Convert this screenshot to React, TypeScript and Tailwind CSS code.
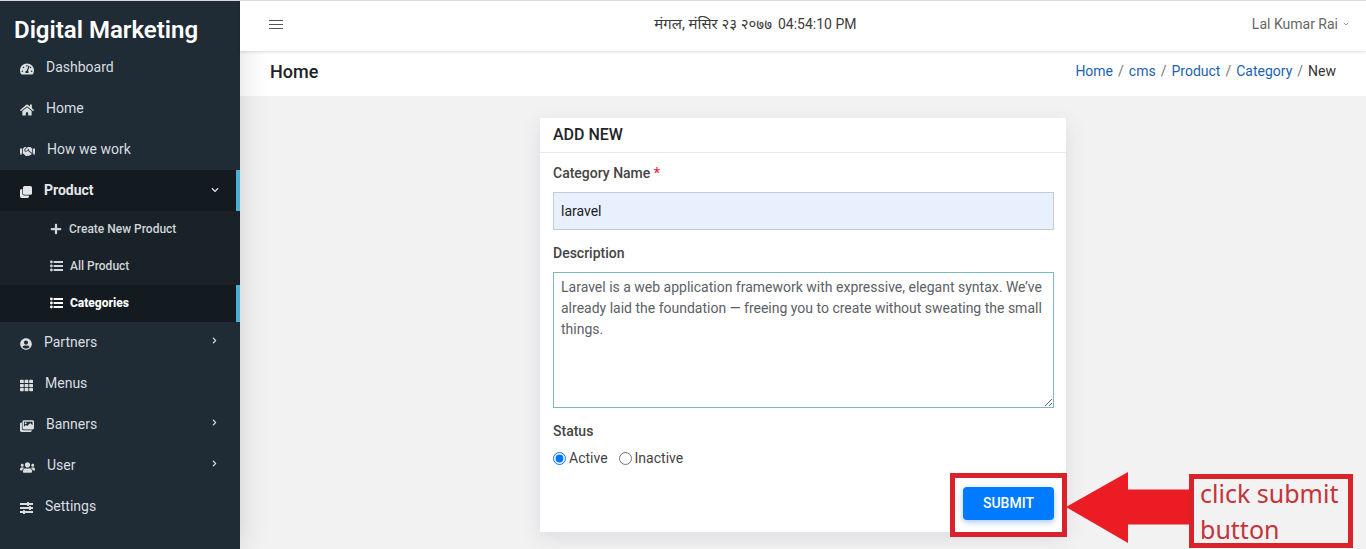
import React from "react";
import {
  FaChevronDown,
  FaChevronRight,
  FaHandshake,
  FaHome,
  FaPlus,
  FaTachometerAlt,
  FaTh,
  FaUserCircle,
  FaUsers,
} from "react-icons/fa";

type IconProps = { className?: string };
type Item = {
  label: string;
  icon: React.ComponentType<IconProps>;
  size: string;
  more?: boolean;
};

function CopyIcon({ className }: IconProps) {
  return (
    <svg viewBox="0 0 13 13" className={className} fill="currentColor" aria-hidden="true">
      <rect x="3.2" y="0" width="9.8" height="9.6" rx="1.8" />
      <path d="M2.5 3.2H1.8A1.8 1.8 0 0 0 0 5v6.2A1.8 1.8 0 0 0 1.8 13H8a1.8 1.8 0 0 0 1.8-1.8v-.9H4.6a2.1 2.1 0 0 1-2.1-2.1Z" />
    </svg>
  );
}

function ListIcon({ className }: IconProps) {
  return (
    <svg viewBox="0 0 13 12" className={className} fill="currentColor" aria-hidden="true">
      <circle cx="1.4" cy="2" r="1.4" />
      <circle cx="1.4" cy="6" r="1.4" />
      <circle cx="1.4" cy="10" r="1.4" />
      <path d="M3.6 1H13V3H3.6ZM3.6 5H13V7H3.6ZM3.6 9H13V11H3.6Z" />
    </svg>
  );
}

function PicturesIcon({ className }: IconProps) {
  return (
    <svg viewBox="0 0 14 12" className={className} fill="currentColor" aria-hidden="true">
      <path d="M1.9 2.4H1.4A1.4 1.4 0 0 0 0 3.8V10.6A1.4 1.4 0 0 0 1.4 12H10.4a1.4 1.4 0 0 0 1.4-1.4V10.2H3.6A1.7 1.7 0 0 1 1.9 8.5Z" />
      <path
        fillRule="evenodd"
        d="M3.9.3H12.6A1.4 1.4 0 0 1 14 1.7V8.1A1.4 1.4 0 0 1 12.6 9.5H3.9A1.4 1.4 0 0 1 2.5 8.1V1.7A1.4 1.4 0 0 1 3.9.3ZM4 1.8V6.6L6 4.9 7.2 6 10.2 3.1 12.5 5.2V1.8Z"
      />
      <circle cx="5.7" cy="3.2" r="1" />
    </svg>
  );
}

function SlidersIcon({ className }: IconProps) {
  return (
    <svg viewBox="0 0 13 12" className={className} fill="currentColor" aria-hidden="true">
      <path d="M0 1H13V3H0ZM0 5H13V7H0ZM0 9H13V11H0Z" />
      <rect x="7" y="0" width="2" height="4" rx=".5" />
      <rect x="9" y="4" width="2" height="4" rx=".5" />
      <rect x="3" y="8" width="2" height="4" rx=".5" />
    </svg>
  );
}

const topItems: Item[] = [
  { label: "Dashboard", icon: FaTachometerAlt, size: "w-[14px]" },
  { label: "Home", icon: FaHome, size: "w-[14px]" },
  { label: "How we work", icon: FaHandshake, size: "w-[15px]" },
];

const bottomItems: Item[] = [
  { label: "Partners", icon: FaUserCircle, size: "w-3", more: true },
  { label: "Menus", icon: FaTh, size: "w-[13px]" },
  { label: "Banners", icon: PicturesIcon, size: "w-[14px]", more: true },
  { label: "User", icon: FaUsers, size: "w-[15px]", more: true },
  { label: "Settings", icon: SlidersIcon, size: "w-[13px]" },
];

const subItems = [
  { label: "Create New Product", icon: FaPlus, size: "w-3", active: false },
  { label: "All Product", icon: ListIcon, size: "w-[13px]", active: false },
  { label: "Categories", icon: ListIcon, size: "w-[13px]", active: true },
];

function NavItem({ label, icon: Icon, size, more }: Item) {
  return (
    <li>
      <a href="#" className="flex h-[41px] items-center gap-3 pr-[22px] pl-5 text-[#d9dee1]">
        <Icon className={`${size} mt-[3px] h-auto shrink-0`} />
        <span className="grow">{label}</span>
        {more && <FaChevronRight className="mb-1 size-[7px]" />}
      </a>
    </li>
  );
}

function Sidebar() {
  return (
    <aside className="z-10 w-60 shrink-0 bg-[#1f2b35] shadow-[0_0_28px_rgba(0,0,0,0.15)]">
      <div className="flex h-[45px] items-end pl-[14px] text-2xl leading-8 font-semibold text-white">
        Digital Marketing
      </div>
      <nav className="pt-px">
        <ul>
          {topItems.map((item) => (
            <NavItem key={item.label} {...item} />
          ))}
          <li>
            <a
              href="#"
              className="flex h-[41px] items-center gap-3 border-r-4 border-[#4bafd4] bg-[#131a20] pr-[17px] pl-5 font-bold text-[#e4e7e9]"
            >
              <CopyIcon className="mt-[3px] w-3 shrink-0" />
              <span className="grow">Product</span>
              <FaChevronDown className="mb-[2px] size-2" />
            </a>
            <ul className="bg-[#192229] text-xs">
              {subItems.map(({ label, icon: Icon, size, active }) => (
                <li key={label}>
                  <a
                    href="#"
                    className={`flex h-[37px] items-center gap-[7px] border-r-4 pb-[2px] pl-[50px] ${
                      active
                        ? "border-[#4bafd4] bg-[#131a20] font-extrabold text-white"
                        : "border-transparent font-medium text-[#d0d5d8]"
                    }`}
                  >
                    <Icon className={`${size} h-auto shrink-0`} />
                    {label}
                  </a>
                </li>
              ))}
            </ul>
          </li>
          {bottomItems.map((item) => (
            <NavItem key={item.label} {...item} />
          ))}
        </ul>
      </nav>
    </aside>
  );
}

function Breadcrumb() {
  return (
    <nav aria-label="Breadcrumb">
      <ol className="flex text-[#333]">
        {["Home", "cms", "Product", "Category"].map((name) => (
          <li key={name} className="flex">
            <a href="#" className="text-[#1c62ad]">
              {name}
            </a>
            <span className="px-[5px] text-[#777]">/</span>
          </li>
        ))}
        <li>New</li>
      </ol>
    </nav>
  );
}

function SubmitCallout() {
  return (
    <div className="pointer-events-none absolute -inset-x-[13px] -top-[14px] -bottom-[17px] border-[5px] border-[#d8232a]">
      <svg
        viewBox="0 0 124 71"
        className="absolute top-[-6px] left-[111px] h-[71px] w-[124px]"
        fill="#ec1c24"
        aria-hidden="true"
      >
        <path d="M0 35 62 0V17.5H124V52.5H62V71Z" />
      </svg>
      <p className="absolute top-[-4px] left-[234px] h-[74px] w-[164px] border-[5px] border-[#d8232a] bg-[#f2f2f2] pl-[6px] font-['Noto_Sans',sans-serif] text-[25px] leading-9 whitespace-nowrap text-[#c4343a]">
        <span className="-mt-1 block">
          click submit
          <br />
          button
        </span>
      </p>
    </div>
  );
}

function CategoryForm() {
  return (
    <form
      onSubmit={(e) => e.preventDefault()}
      className="mx-auto w-full max-w-[526px] bg-white shadow-[0_6px_20px_rgba(69,65,120,0.12)]"
    >
      <h2 className="border-b border-[#e6e8ea] px-[13px] py-[5px] text-base leading-6 font-medium text-[#212529]">
        ADD NEW
      </h2>
      <div className="pt-[10px] pr-3 pb-3 pl-[13px]">
        <label htmlFor="name" className="mb-2 block font-medium">
          Category Name <span className="text-[#e02b33]">*</span>
        </label>
        <input
          id="name"
          defaultValue="laravel"
          className="mb-[13px] block h-[38px] w-full border border-[#c5cbd5] bg-[#e8f0fe] px-[7px] text-[#222] outline-none"
        />
        <label htmlFor="description" className="mb-2 block font-medium">
          Description
        </label>
        <textarea
          id="description"
          defaultValue="Laravel is a web application framework with expressive, elegant syntax. We’ve already laid the foundation — freeing you to create without sweating the small things."
          className="mb-[13px] block h-[136px] w-full resize border border-[#7fb5cb] px-[7px] py-1 text-[#5b6166] outline-none"
        />
        <fieldset>
          <legend className="mb-[6px] font-medium">Status</legend>
          <div className="flex gap-[11px]">
            <label className="flex items-center gap-[3px]">
              <input type="radio" name="status" defaultChecked className="size-[13px]" />
              Active
            </label>
            <label className="flex items-center gap-[3px]">
              <input type="radio" name="status" className="size-[13px]" />
              Inactive
            </label>
          </div>
        </fieldset>
        <div className="mt-[18px] flex justify-end">
          <div className="relative">
            <button
              type="submit"
              className="block h-[33px] w-[91px] rounded bg-[#007bff] font-medium text-white shadow-[0_2px_6px_rgba(0,90,220,0.35)]"
            >
              SUBMIT
            </button>
            <SubmitCallout />
          </div>
        </div>
      </div>
    </form>
  );
}

export default function App() {
  return (
    <div className="flex min-h-screen flex-col overflow-hidden border-t border-[#d5dadd] bg-[#f2f2f2] font-[Roboto,'Noto_Sans',sans-serif] text-sm leading-[21px] text-[#444]">
      <div className="flex grow">
        <Sidebar />
        <div className="min-w-0 grow">
          <header className="relative z-20 flex h-[50px] items-center justify-between bg-white pr-[17px] pb-1 pl-[29px] shadow-[0_1px_3px_rgba(0,0,0,0.14)]">
            <button type="button" aria-label="Toggle menu">
              <svg viewBox="0 0 14 11" className="h-[11px] w-[14px]" stroke="#555" aria-hidden="true">
                <path d="M0 1.5H14M0 5.5H14M0 9.5H14" />
              </svg>
            </button>
            <time className="mr-6 flex items-baseline gap-[6px] text-[#3c3c3c]">
              <span className="text-[15px]">मंगल, मंसिर २३ २०७७</span>
              <span>04:54:10 PM</span>
            </time>
            <button type="button" className="flex items-center gap-[5px] text-[#666]">
              Lal Kumar Rai
              <svg viewBox="0 0 6 4" className="h-1 w-[6px]" fill="none" stroke="#999" aria-hidden="true">
                <path d="M.8.8 3 3 5.2.8" />
              </svg>
            </button>
          </header>
          <div className="flex h-[45px] items-center justify-between bg-white px-[30px] pb-[5px]">
            <h1 className="text-lg leading-[21px] font-medium text-[#212121]">Home</h1>
            <Breadcrumb />
          </div>
          <main className="pt-[22px] pb-4">
            <CategoryForm />
          </main>
        </div>
      </div>
    </div>
  );
}
